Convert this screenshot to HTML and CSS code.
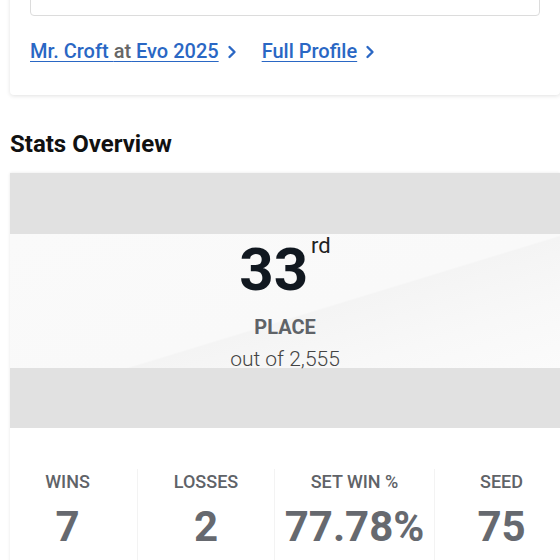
FILE: index.html
```html
<!DOCTYPE html>
<html lang="en">
<head>
    <meta charset="UTF-8">
    <meta name="viewport" content="width=device-width, initial-scale=1.0">
    <title>Mr. Croft - Evo 2025 Stats</title>
    <link rel="stylesheet" href="styles.css">
</head>
<body>
    <!-- Player card (scrolled partly out of view) -->
    <div class="player-card">
        <div class="player-box"></div>
        <div class="player-links">
            <a class="player-link" href="#">Mr. Croft <span class="muted">at</span> Evo 2025</a>
            <svg class="chevron" width="10" height="14" viewBox="0 0 10 14"><path d="M2.5 2 L7.5 7 L2.5 12" fill="none" stroke="#2a67c4" stroke-width="2.4" stroke-linecap="round" stroke-linejoin="round"/></svg>
            <a class="player-link second" href="#">Full Profile</a>
            <svg class="chevron" width="10" height="14" viewBox="0 0 10 14"><path d="M2.5 2 L7.5 7 L2.5 12" fill="none" stroke="#2a67c4" stroke-width="2.4" stroke-linecap="round" stroke-linejoin="round"/></svg>
        </div>
    </div>

    <!-- Stats Overview -->
    <h2 class="section-title">Stats Overview</h2>
    <div class="stats-card">
        <div class="placement-banner">
            <div class="placement">
                <div class="placement-rank">
                    <span class="rank-number">33</span>
                    <span class="rank-suffix">rd</span>
                </div>
                <div class="placement-label">PLACE</div>
                <div class="placement-total">out of 2,555</div>
            </div>
        </div>
        <div class="stats-row">
            <div class="stat">
                <div class="stat-label">WINS</div>
                <div class="stat-value">7</div>
            </div>
            <div class="stat">
                <div class="stat-label">LOSSES</div>
                <div class="stat-value">2</div>
            </div>
            <div class="stat">
                <div class="stat-label">SET WIN %</div>
                <div class="stat-value">77.78%</div>
            </div>
            <div class="stat">
                <div class="stat-label">SEED</div>
                <div class="stat-value">75</div>
            </div>
        </div>
    </div>
</body>
</html>
```

FILE: styles.css
```css
body {
    margin: 0;
    font-family: Roboto, "Liberation Sans", Arial, sans-serif;
    background-color: #fff;
    color: #111;
    overflow: hidden;
}

/* Player card */
.player-card {
    margin: -40px 0 0 10px;
    width: 550px;
    padding: 0 20px 32px;
    box-sizing: border-box;
    background-color: #fff;
    box-shadow: 0 1px 4px rgba(0, 0, 0, 0.12);
    border-radius: 0 0 4px 4px;
}

.player-box {
    height: 56px;
    border: 1px solid #dcdcdc;
    border-radius: 4px;
    box-sizing: border-box;
}

.player-links {
    display: flex;
    align-items: center;
    margin-top: 23px;
    height: 24px;
}

.player-link {
    font-size: 20px;
    line-height: 24px;
    font-weight: 500;
    color: #2a67c4;
    text-decoration: underline;
    text-decoration-thickness: 1px;
    text-underline-offset: 3px;
}

.player-link .muted {
    color: #666;
}

.player-link.second {
    margin-left: 25px;
}

.chevron {
    margin-left: 8px;
    margin-top: 1px;
}

/* Stats Overview */
.section-title {
    margin: 35px 0 15px 10px;
    font-size: 24px;
    line-height: 28px;
    font-weight: 700;
    color: #111;
}

.stats-card {
    margin-left: 10px;
    width: 550px;
    background-color: #fff;
    box-shadow: 0 0 3px rgba(0, 0, 0, 0.1);
    overflow: hidden;
}

.placement-banner {
    height: 255px;
    background-color: #e1e1e1;
    display: flex;
    align-items: center;
}

.placement {
    width: 100%;
    height: 134px;
    box-sizing: border-box;
    padding-top: 6px;
    background: linear-gradient(163deg, #fafafa 0%, #f9f9f9 56%, #f4f4f4 56.6%, #f8f8f8 78%, #fbfbfb 100%);
    text-align: center;
}

.placement-rank {
    display: flex;
    justify-content: center;
    align-items: flex-start;
}

.rank-number {
    font-size: 60px;
    line-height: 60px;
    font-weight: 700;
    color: #111820;
}

.rank-suffix {
    font-size: 22px;
    line-height: 22px;
    margin: -5px 0 0 3px;
    color: #222;
}

.placement-label {
    margin-top: 15px;
    font-size: 20px;
    line-height: 24px;
    font-weight: 700;
    color: #5f6368;
}

.placement-total {
    margin-top: 8px;
    font-size: 21px;
    line-height: 24px;
    font-weight: 300;
    color: #444;
}

.stats-row {
    display: grid;
    grid-template-columns: 127px 137px 160px 134px;
    padding-top: 41px;
}

.stat {
    text-align: center;
    padding-top: 2px;
    height: 100px;
}

.stat:first-child {
    padding-right: 12px;
}

.stat + .stat {
    border-left: 1px solid #f3f3f3;
}

.stat-label {
    font-size: 18px;
    line-height: 22px;
    font-weight: 500;
    color: #5f6368;
}

.stat-value {
    margin-top: 10px;
    font-size: 42px;
    line-height: 48px;
    font-weight: 700;
    color: #66696f;
}
```
